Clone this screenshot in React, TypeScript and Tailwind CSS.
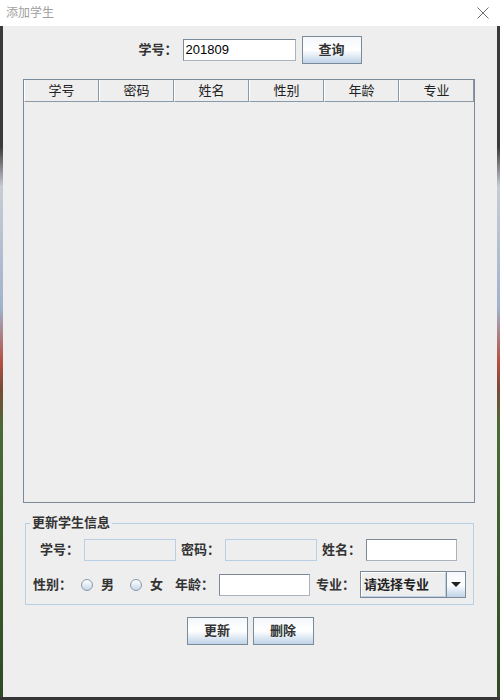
import React from 'react';

const font = "font-['Liberation_Sans','Noto_Sans_CJK_SC',sans-serif]";

const btn =
  'flex items-center justify-center border border-[#7a8a99] bg-gradient-to-b from-[#f4f7fb] via-white to-[#bfd3e8] text-[13px] font-bold text-[#333]';

const Label = ({ text, w }: { text: string; w: string }) => (
  <div className={`${w} shrink-0 text-[13px] font-bold text-[#333] leading-[16px]`}>{text}</div>
);

const Field = ({ w, value, disabled }: { w: string; value?: string; disabled?: boolean }) => (
  <div
    className={`${w} h-[22px] shrink-0 flex items-center px-[2px] text-[13px] text-black ${
      disabled ? 'border border-[#b8cfe5] bg-[#eeeeee]' : 'border border-[#7a8a99] border-r-[#aab4be] border-b-[#aab4be] bg-white'
    }`}
  >
    {value}
  </div>
);

const Radio = () => (
  <div className="w-[12px] h-[12px] shrink-0 rounded-full border border-[#8a99a8] bg-gradient-to-b from-white to-[#c6d7ea]" />
);

const columns = ['学号', '密码', '姓名', '性别', '年龄', '专业'];

const strip =
  'w-[3px] shrink-0 bg-[linear-gradient(to_bottom,#3a3a3a_0%,#3a3a3a_18%,#c8ccd4_24%,#9fb2cc_42%,#b65040_50%,#7a4a36_54%,#4a6b35_60%,#2f4a24_100%)]';

export default function App() {
  return (
    <div className={`w-[500px] h-[700px] flex flex-col bg-[#353535] ${font}`}>
      {/* title bar */}
      <div className="h-[26px] shrink-0 bg-white flex items-center justify-between pl-[6px] pr-[10px]">
        <span className="text-[12px] text-[#a0a0a0] leading-none">添加学生</span>
        <svg width="12" height="12" viewBox="0 0 12 12" className="mr-[1px]">
          <path d="M0.5 0.5 L11.5 11.5 M11.5 0.5 L0.5 11.5" stroke="#6e6e6e" strokeWidth="1" fill="none" />
        </svg>
      </div>

      <div className="flex flex-1">
        <div className={strip} />
        <div className="flex-1 bg-[#eeeeee] flex flex-col">
          {/* search row */}
          <div className="mt-[10px] flex items-center justify-center">
            <Label text="学号：" w="w-[44px]" />
            <Field w="w-[113px]" value="201809" />
            <button className={`${btn} ml-[6px] w-[60px] h-[28px]`}>查询</button>
          </div>

          {/* table */}
          <div className="mt-[15px] ml-[20px] w-[452px] h-[424px] border border-[#7a8a99] flex flex-col">
            <div className="flex h-[22px] shrink-0">
              {columns.map((c) => (
                <div
                  key={c}
                  className="w-[75px] h-full flex items-center justify-center border-l border-l-white border-r border-b border-[#8a99a8] text-[13px] text-[#222]"
                >
                  {c}
                </div>
              ))}
            </div>
            <div className="flex-1" />
          </div>

          {/* group */}
          <fieldset className="mt-[12px] ml-[22px] w-[449px] border border-[#b8cfe5] pb-[6px]">
            <legend className="ml-[4px] px-[2px] text-[13px] font-bold text-[#333] leading-[16px]">更新学生信息</legend>
            <div className="mt-[8px] flex items-center pl-[14px]">
              <Label text="学号：" w="w-[44px]" />
              <Field w="w-[92px]" disabled />
              <div className="ml-[5px]" />
              <Label text="密码：" w="w-[44px]" />
              <Field w="w-[92px]" disabled />
              <div className="ml-[5px]" />
              <Label text="姓名：" w="w-[44px]" />
              <Field w="w-[91px]" />
            </div>
            <div className="mt-[10px] flex items-center pl-[7px]">
              <Label text="性别：" w="w-[48px]" />
              <Radio />
              <span className="ml-[8px] text-[13px] font-bold text-[#333]">男</span>
              <div className="ml-[16px]" />
              <Radio />
              <span className="ml-[8px] text-[13px] font-bold text-[#333]">女</span>
              <div className="ml-[12px]" />
              <Label text="年龄：" w="w-[44px]" />
              <Field w="w-[91px]" />
              <div className="ml-[6px]" />
              <Label text="专业：" w="w-[44px]" />
              <div className="w-[106px] h-[27px] shrink-0 flex border border-[#7a8a99]">
                <div className="flex-1 flex items-center pl-[2px] border border-white border-r-[#b8cfe5] border-b-[#b8cfe5] bg-[#eeeeee] text-[13px] font-bold text-[#222]">
                  请选择专业
                </div>
                <div className="w-[19px] flex items-center justify-center border-l border-[#7a8a99] bg-gradient-to-b from-[#f4f7fb] via-white to-[#bfd3e8]">
                  <svg width="10" height="5" viewBox="0 0 10 5">
                    <path d="M0 0 H10 L5 5 Z" fill="#222" />
                  </svg>
                </div>
              </div>
            </div>
          </fieldset>

          {/* buttons */}
          <div className="mt-[12px] flex justify-center gap-[5px]">
            <button className={`${btn} w-[61px] h-[28px]`}>更新</button>
            <button className={`${btn} w-[61px] h-[28px]`}>删除</button>
          </div>
        </div>
        <div className={strip} />
      </div>
      <div className="h-[3px] shrink-0" />
    </div>
  );
}
